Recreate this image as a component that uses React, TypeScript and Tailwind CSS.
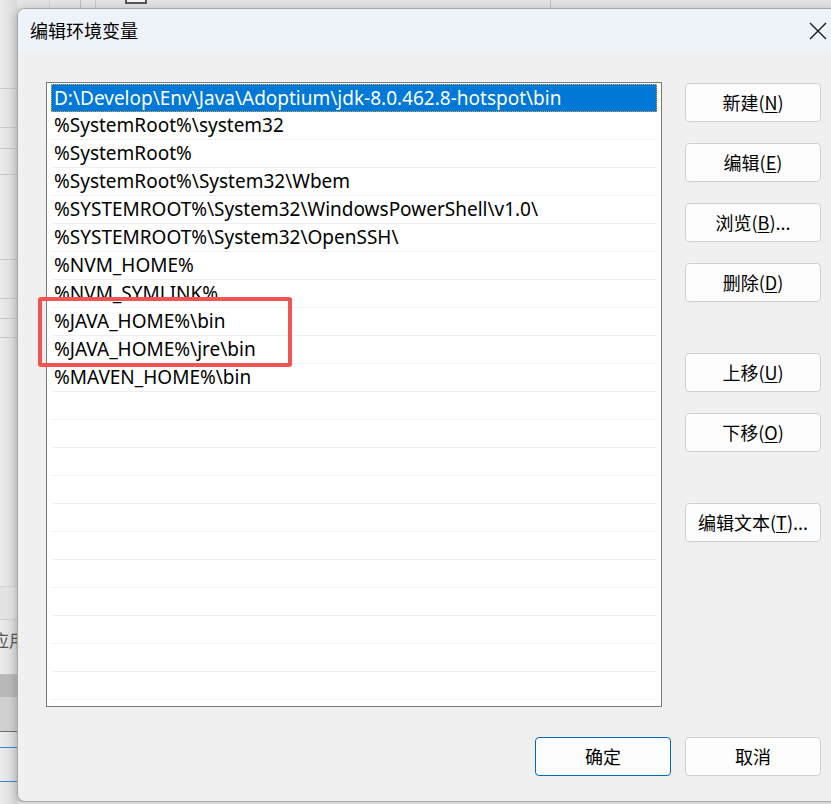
import React from "react";

const ui = { fontFamily: '"Segoe UI", "Noto Sans", "Noto Sans CJK SC", sans-serif' };
const cjk = { fontFamily: '"Noto Sans CJK SC", "Noto Sans", sans-serif' };

const paths = [
  "D:\\Develop\\Env\\Java\\Adoptium\\jdk-8.0.462.8-hotspot\\bin",
  "%SystemRoot%\\system32",
  "%SystemRoot%",
  "%SystemRoot%\\System32\\Wbem",
  "%SYSTEMROOT%\\System32\\WindowsPowerShell\\v1.0\\",
  "%SYSTEMROOT%\\System32\\OpenSSH\\",
  "%NVM_HOME%",
  "%NVM_SYMLINK%",
  "%JAVA_HOME%\\bin",
  "%JAVA_HOME%\\jre\\bin",
  "%MAVEN_HOME%\\bin",
];

const TOTAL_ROWS = 22;

function Btn({
  label,
  k,
  tail = "",
  primary = false,
  className = "",
}: {
  label: string;
  k?: string;
  tail?: string;
  primary?: boolean;
  className?: string;
}) {
  return (
    <div
      className={
        "w-[136px] h-[39px] flex items-center justify-center rounded-[4px] bg-[#fdfdfd] text-[18px] text-black " +
        (primary ? "border border-[#0067c0] " : "border border-[#d0d0d0] ") +
        className
      }
      style={cjk}
    >
      <span>
        {label}
        {k ? (
          <>
            (<span className="underline underline-offset-2">{k}</span>)
          </>
        ) : null}
        {tail}
      </span>
    </div>
  );
}

function BackdropLeft() {
  // window behind the dialog, only its right edge shows
  return (
    <div className="w-[17px] h-full flex flex-col bg-gradient-to-r from-[#ececec] to-[#d9d9d9]">
      <div className="h-[89px] border-b border-[#c8c8c8]" />
      <div className="h-[39px] border-b border-[#c8c8c8]" />
      <div className="h-[21px] border-b border-[#c8c8c8]" />
      <div className="h-[26px] border-b border-[#c8c8c8]" />
      <div className="h-[85px] border-b border-[#c8c8c8]" />
      <div className="h-[39px] border-b border-[#c8c8c8]" />
      <div className="h-[20px] border-b border-[#c8c8c8]" />
      <div className="h-[19px] border-b border-[#c8c8c8]" />
      <div className="h-[249px] border-b border-[#d4d4d4]" />
      <div className="h-[33px] border-b border-[#d0d0d0] bg-[#e2e2e2]" />
      <div className="h-[40px] flex items-center overflow-hidden">
        <span className="text-[17px] text-[#555] -ml-[8px] whitespace-nowrap" style={cjk}>
          应用
        </span>
      </div>
      <div className="h-[15px] border-b border-[#c0c0c0]" />
      <div className="h-[22px] bg-[#b8b8b8]" />
      <div className="h-[35px] border-b border-[#707070] bg-[#d0d0d0]" />
      <div className="h-[16px] border-b border-[#3a86d4]" />
      <div className="h-[34px] border-b border-[#3a86d4]" />
      <div className="flex-1" />
    </div>
  );
}

export default function App() {
  return (
    <div className="w-[831px] h-[804px] overflow-hidden bg-[#dcdcdc] flex" style={ui}>
      <BackdropLeft />
      <div className="flex-1 flex flex-col">
        {/* strip of the window behind, above the dialog */}
        <div className="h-[8px] flex bg-[#e4e4e4]">
          <div className="w-[33px] border-r border-[#cfcfcf]" />
          <div className="w-[31px] border-r border-[#bdbdbd]" />
          <div className="w-[15px] border-r border-[#c8c8c8]" />
          <div className="w-[29px]" />
          <div className="w-[22px] h-[4px] bg-[#f5f5f5] border-2 border-t-0 border-[#555]" />
          <div className="w-[404px] border-r border-[#bdbdbd]" />
          <div className="flex-1" />
        </div>

        {/* dialog */}
        <div className="w-[818px] h-[794px] flex flex-col rounded-l-[8px] overflow-hidden border border-[#a8a8a8] shadow-[0_2px_10px_rgba(0,0,0,0.25)] bg-[#f0f0f0]">
          <div className="h-[43px] shrink-0 bg-[#eef3f9] flex items-center justify-between pl-[12px] pr-[7px]">
            <span className="text-[18px] text-black" style={cjk}>
              编辑环境变量
            </span>
            <svg width="18" height="18" viewBox="0 0 18 18">
              <path d="M1 1L17 17M17 1L1 17" stroke="#1a1a1a" strokeWidth="1.4" />
            </svg>
          </div>

          <div className="flex-1 flex flex-col pl-[28px] pt-[30px]">
            <div className="flex">
              {/* path list */}
              <div className="relative w-[616px] h-[625px] border border-[#7a7a7a] bg-white pt-[1px] px-[4px]">
                {Array.from({ length: TOTAL_ROWS }).map((_, i) => {
                  const text = paths[i] ?? "";
                  const sel = i === 0;
                  return (
                    <div
                      key={i}
                      className={
                        "h-[28px] flex items-center pl-[3px] text-[19px] leading-none whitespace-nowrap " +
                        (sel
                          ? "bg-[#0078d7] text-white outline-1 outline-dotted outline-[#d9a441] -outline-offset-1"
                          : "text-black border-b border-[#f0f0f0]")
                      }
                    >
                      {text}
                    </div>
                  );
                })}
                {/* red highlight box */}
                <div className="absolute left-[-9px] top-[214px] w-[254px] h-[70px] border-[4px] border-[#f25454] rounded-[3px]" />
              </div>

              {/* side buttons */}
              <div className="ml-[23px] pt-[1px] flex flex-col">
                <Btn label="新建" k="N" />
                <Btn label="编辑" k="E" className="mt-[21px]" />
                <Btn label="浏览" k="B" tail="..." className="mt-[21px]" />
                <Btn label="删除" k="D" className="mt-[21px]" />
                <Btn label="上移" k="U" className="mt-[51px]" />
                <Btn label="下移" k="O" className="mt-[21px]" />
                <Btn label="编辑文本" k="T" tail="..." className="mt-[51px]" />
              </div>
            </div>

            <div className="flex justify-end gap-[14px] mt-[30px] pr-[13px]">
              <Btn label="确定" primary />
              <Btn label="取消" />
            </div>
          </div>
        </div>
        <div className="flex-1 bg-[#d8d8d8]" />
      </div>
    </div>
  );
}
